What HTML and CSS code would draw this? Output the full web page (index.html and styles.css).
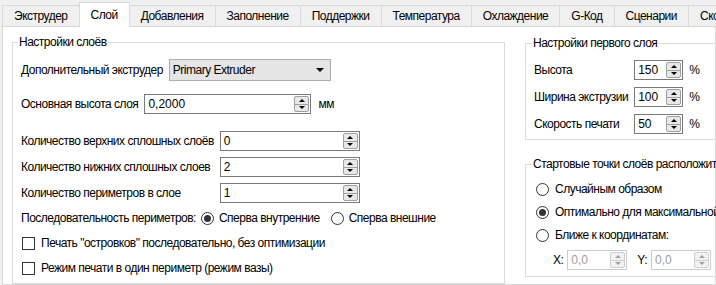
FILE: index.html
```html
<!DOCTYPE html>
<html lang="ru">
<head>
  <meta charset="UTF-8" />
  <title>Настройки слоя</title>
  <link rel="stylesheet" href="styles.css">
</head>
<body>
  <div class="tabs">
    <div class="tab">Экструдер</div>
    <div class="tab active">Слой</div>
    <div class="tab">Добавления</div>
    <div class="tab">Заполнение</div>
    <div class="tab">Поддержки</div>
    <div class="tab">Температура</div>
    <div class="tab">Охлаждение</div>
    <div class="tab">G-Код</div>
    <div class="tab">Сценарии</div>
    <div class="tab">Скорость</div>
  </div>
  <div class="pane">
    <fieldset class="group group-layers">
      <legend>Настройки слоёв</legend>
      <div class="row row-combo">
        <span>Дополнительный экструдер</span>
        <div class="combo">
          <span>Primary Extruder</span>
          <span class="combo-arrow"></span>
        </div>
      </div>
      <div class="row row-height">
        <span>Основная высота слоя</span>
        <div class="spin spin-height">
          <span class="spin-val">0,2000</span>
          <span class="spin-btns"><i class="up"></i><i class="down"></i></span>
        </div>
        <span class="unit">мм</span>
      </div>
      <div class="count-grid">
        <span>Количество верхних сплошных слоёв</span>
        <div class="spin spin-count">
          <span class="spin-val">0</span>
          <span class="spin-btns"><i class="up"></i><i class="down"></i></span>
        </div>
        <span>Количество нижних сплошных слоев</span>
        <div class="spin spin-count">
          <span class="spin-val">2</span>
          <span class="spin-btns"><i class="up"></i><i class="down"></i></span>
        </div>
        <span>Количество периметров в слое</span>
        <div class="spin spin-count">
          <span class="spin-val">1</span>
          <span class="spin-btns"><i class="up"></i><i class="down"></i></span>
        </div>
      </div>
      <div class="row row-order">
        <span>Последовательность периметров:</span>
        <label class="opt"><span class="radio checked"></span>Сперва внутренние</label>
        <label class="opt"><span class="radio"></span>Сперва внешние</label>
      </div>
      <label class="row row-check"><span class="check"></span>Печать "островков" последовательно, без оптимизации</label>
      <label class="row row-check"><span class="check"></span>Режим печати в один периметр (режим вазы)</label>
    </fieldset>

    <div class="side">
      <fieldset class="group group-first">
        <legend>Настройки первого слоя</legend>
        <div class="first-grid">
          <span>Высота</span>
          <div class="spin spin-pct">
            <span class="spin-val">150</span>
            <span class="spin-btns"><i class="up"></i><i class="down"></i></span>
          </div>
          <span class="unit">%</span>
          <span>Ширина экструзии</span>
          <div class="spin spin-pct">
            <span class="spin-val">100</span>
            <span class="spin-btns"><i class="up"></i><i class="down"></i></span>
          </div>
          <span class="unit">%</span>
          <span>Скорость печати</span>
          <div class="spin spin-pct">
            <span class="spin-val">50</span>
            <span class="spin-btns"><i class="up"></i><i class="down"></i></span>
          </div>
          <span class="unit">%</span>
        </div>
      </fieldset>

      <fieldset class="group group-start">
        <legend>Стартовые точки слоёв расположить</legend>
        <label class="row row-start"><span class="radio"></span>Случайным образом</label>
        <label class="row row-start"><span class="radio checked"></span>Оптимально для максимальной скорости</label>
        <label class="row row-start"><span class="radio"></span>Ближе к координатам:</label>
        <div class="row row-coords">
          <span>X:</span>
          <div class="spin spin-coord disabled">
            <span class="spin-val">0,0</span>
            <span class="spin-btns"><i class="up"></i><i class="down"></i></span>
          </div>
          <span class="coord-y">Y:</span>
          <div class="spin spin-coord disabled">
            <span class="spin-val">0,0</span>
            <span class="spin-btns"><i class="up"></i><i class="down"></i></span>
          </div>
        </div>
      </fieldset>
    </div>
  </div>
</body>
</html>
```

FILE: styles.css
```css
html, body {
  margin: 0;
  padding: 0;
  height: 100%;
  overflow: hidden;
}
body {
  font-family: "Liberation Sans", Arial, sans-serif;
  font-size: 12px;
  letter-spacing: -0.5px;
  color: #000;
  background: #f0f0f0;
}

/* tab strip */
.tabs {
  display: flex;
  align-items: flex-end;
  height: 26px;
  padding-left: 3px;
  white-space: nowrap;
}
.tab {
  height: 21px;
  line-height: 20px;
  padding: 0 11px;
  border: 1px solid #d9d9d9;
  border-bottom: none;
  margin-left: -1px;
  background: #f0f0f0;
  box-sizing: border-box;
  flex: none;
}
.tab.active {
  height: 25px;
  line-height: 24px;
  margin-bottom: -1px;
  background: #fff;
  position: relative;
  z-index: 1;
}

/* tab page */
.pane {
  display: flex;
  gap: 20px;
  align-items: flex-start;
  height: 259px;
  margin-left: 2px;
  padding: 7px 0 0 9px;
  border: 1px solid #d9d9d9;
  background: #fff;
  box-sizing: border-box;
  white-space: nowrap;
}

/* group boxes */
.group {
  margin: 0;
  border: 1px solid #dcdcdc;
  min-inline-size: 0;
  box-sizing: border-box;
}
.group legend {
  line-height: 16px;
  padding: 0 1px;
  margin-left: -3px;
}
.group-layers {
  width: 493px;
  flex: none;
  padding: 8px 8px 7px 8px;
}
.side {
  display: flex;
  flex-direction: column;
  gap: 16px;
  padding-top: 1px;
  flex: none;
}
.group-first,
.group-start {
  width: 240px;
  padding: 9px 8px 5px 8px;
}
.group-first legend,
.group-start legend {
  margin-left: -2px;
}
.group-start {
  padding-bottom: 6px;
}

/* rows */
.row {
  display: flex;
  align-items: center;
  gap: 6px;
}
.row-combo {
  margin-top: 1px;
}
.row-height {
  margin-top: 13px;
}
.unit {
  margin-left: 1px;
}
.count-grid {
  display: grid;
  grid-template-columns: auto 140px;
  column-gap: 6px;
  row-gap: 6px;
  align-items: center;
  justify-content: start;
  margin-top: 17px;
}
.row-order {
  height: 16px;
  margin-top: 7px;
  gap: 5px;
}
.opt {
  display: flex;
  align-items: center;
  gap: 5px;
  margin-right: 6px;
}
.row-check {
  height: 16px;
  margin-top: 9px;
  margin-left: 1px;
}

.first-grid {
  display: grid;
  grid-template-columns: auto 49px auto;
  column-gap: 6px;
  row-gap: 7px;
  align-items: center;
  width: max-content;
}
.first-grid .unit {
  margin-left: 0;
}
.row-start {
  height: 16px;
  margin-top: 7px;
  margin-left: 2px;
}
.row-start:first-of-type {
  margin-top: 0;
}
.row-coords {
  margin-top: 7px;
  margin-left: 19px;
  gap: 4px;
}
.coord-y {
  margin-left: 6px;
}

/* combo box */
.combo {
  display: flex;
  align-items: center;
  justify-content: space-between;
  width: 162px;
  height: 22px;
  padding: 0 6px 0 3px;
  border: 1px solid #adadad;
  background: #e5e5e5;
  box-sizing: border-box;
}
.combo-arrow {
  width: 0;
  height: 0;
  border-left: 4px solid transparent;
  border-right: 4px solid transparent;
  border-top: 4px solid #000;
}

/* spin boxes */
.spin {
  display: flex;
  height: 20px;
  border: 1px solid #7a7a7a;
  background: #fff;
  box-sizing: border-box;
  letter-spacing: 0;
}
.spin-height { width: 167px; }
.spin-count { width: 140px; }
.spin-pct { width: 49px; }
.spin-coord { width: 60px; }
.spin-val {
  flex: 1;
  padding-left: 3px;
  line-height: 18px;
}
.spin-btns {
  width: 13px;
  margin: 1px;
  display: flex;
  flex-direction: column;
  border: 1px solid #a0a0a0;
  border-radius: 2px;
  background: #e8e8e8;
}
.spin-btns i {
  flex: 1;
  display: flex;
  align-items: center;
  justify-content: center;
}
.spin-btns i + i {
  border-top: 1px solid #a0a0a0;
}
.spin-btns .up::before,
.spin-btns .down::before {
  content: "";
  width: 0;
  height: 0;
  border-left: 3px solid transparent;
  border-right: 3px solid transparent;
}
.spin-btns .up::before { border-bottom: 3px solid #000; }
.spin-btns .down::before { border-top: 3px solid #000; }
.spin.disabled {
  border-color: #cccccc;
  color: #a0a0a0;
}
.spin.disabled .spin-btns {
  border-color: #cfcfcf;
  background: #f2f2f2;
}
.spin.disabled .spin-btns i + i { border-top-color: #cfcfcf; }
.spin.disabled .up::before { border-bottom-color: #a0a0a0; }
.spin.disabled .down::before { border-top-color: #a0a0a0; }

/* radio and check */
.radio,
.check {
  width: 13px;
  height: 13px;
  border: 1px solid #333;
  background: #fff;
  box-sizing: border-box;
  flex: none;
  display: flex;
  align-items: center;
  justify-content: center;
}
.radio {
  border-radius: 50%;
}
.radio.checked::after {
  content: "";
  width: 7px;
  height: 7px;
  border-radius: 50%;
  background: #333;
}
```
